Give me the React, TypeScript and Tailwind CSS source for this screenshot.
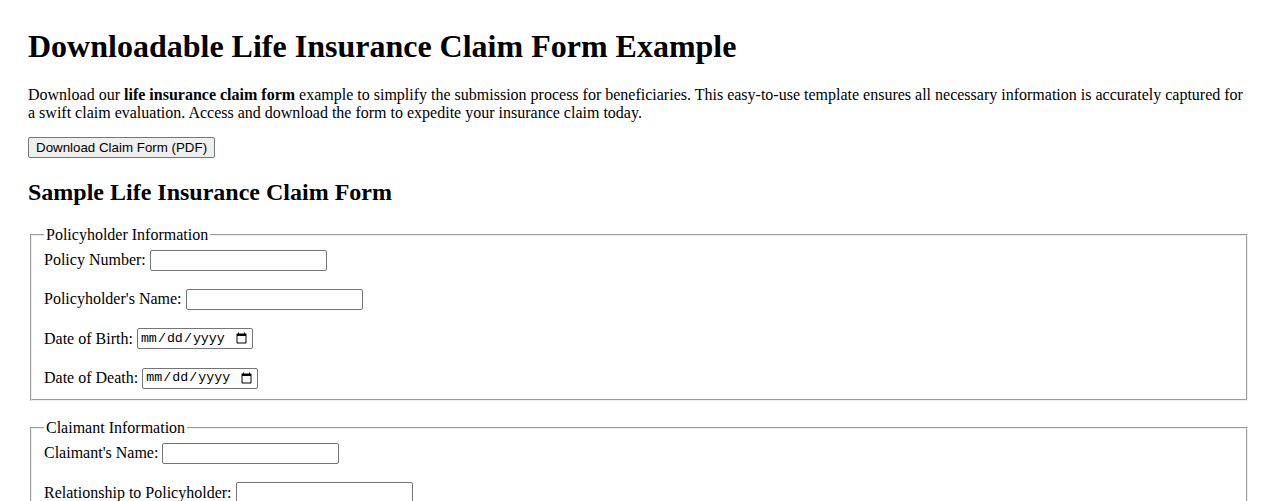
const inputBase =
  "h-[21px] rounded-[2px] border border-[#767676] bg-white px-[2px] py-[1px] text-[13.33px] text-black";

function TextRow({ id, label }: { id: string; label: string }) {
  return (
    <div className="flex h-[21px] items-center">
      <label htmlFor={id} className="mr-[4px] leading-[18px]">
        {label}
      </label>
      <input id={id} type="text" className={`${inputBase} w-[177px] font-['Liberation_Sans',Arial,sans-serif]`} />
    </div>
  );
}

function DateRow({ id, label }: { id: string; label: string }) {
  return (
    <div className="flex h-[21px] items-center">
      <label htmlFor={id} className="mr-[4px] leading-[18px]">
        {label}
      </label>
      <input id={id} type="date" className={`${inputBase} w-[116px] font-['Liberation_Mono','Courier_New',monospace]`} />
    </div>
  );
}

function Section({ legend, children, className = "" }: { legend: string; children: React.ReactNode; className?: string }) {
  return (
    <fieldset className={`mx-[2px] [border:2px_groove_threedface] px-[12px] pt-[5.6px] pb-[10px] ${className}`}>
      <legend className="px-[2px] leading-[18px]">{legend}</legend>
      <div className="flex flex-col gap-[18.4px]">{children}</div>
    </fieldset>
  );
}

export default function App() {
  return (
    <div className="min-h-screen bg-white px-[28px] pt-[28px] pb-[28px] font-['Liberation_Serif','Times_New_Roman',serif] text-[16px] text-black">
      <h1 className="mb-[21px] text-[32px] leading-[37px] font-bold">Downloadable Life Insurance Claim Form Example</h1>
      <p className="mb-[15px] leading-[18px]">
        Download our <strong>life insurance claim form</strong> example to simplify the submission process for
        beneficiaries. This easy-to-use template ensures all necessary information is accurately captured for a swift
        claim evaluation. Access and download the form to expedite your insurance claim today.
      </p>
      <button
        type="button"
        className="block h-[21px] rounded-[2px] border border-[#767676] bg-[#efefef] px-[7px] font-['Liberation_Sans',Arial,sans-serif] text-[13.33px] leading-none text-black"
      >
        Download Claim Form (PDF)
      </button>

      <h2 className="mt-[20px] mb-[20px] text-[24px] leading-[28px] font-bold">Sample Life Insurance Claim Form</h2>

      <form>
        <Section legend="Policyholder Information">
          <TextRow id="policy-number" label="Policy Number:" />
          <TextRow id="policyholder-name" label="Policyholder's Name:" />
          <DateRow id="dob" label="Date of Birth:" />
          <DateRow id="dod" label="Date of Death:" />
        </Section>

        <Section legend="Claimant Information" className="mt-[18.4px]">
          <TextRow id="claimant-name" label="Claimant's Name:" />
          <TextRow id="relationship" label="Relationship to Policyholder:" />
          <TextRow id="contact" label="Contact Number:" />
          <TextRow id="email" label="Email Address:" />
        </Section>
      </form>
    </div>
  );
}
